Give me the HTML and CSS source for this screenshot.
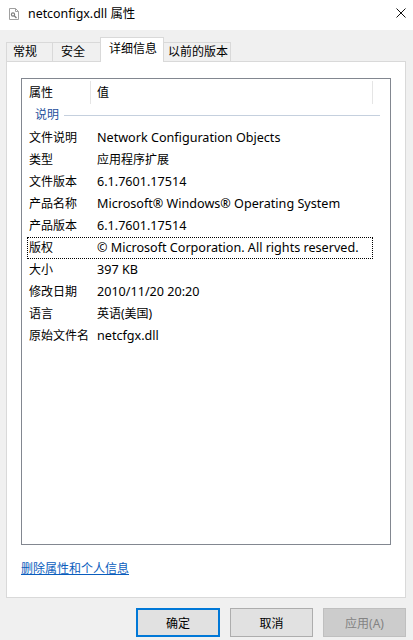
FILE: index.html
```html
<!DOCTYPE html>
<html lang="zh-CN">
<head>
<meta charset="utf-8">
<title>netconfigx.dll 属性</title>
<link rel="stylesheet" href="styles.css">
</head>
<body>
<div class="window">
  <div class="titlebar">
    <svg class="file-icon" width="10" height="12" viewBox="0 0 10 12">
      <path d="M0.5 0.5 H6.5 L9.5 3.5 V11.5 H0.5 Z" fill="#fff" stroke="#a0a0a0"/>
      <path d="M6.5 0.5 V3.5 H9.5" fill="none" stroke="#a0a0a0"/>
      <circle cx="4" cy="6.5" r="1.6" fill="none" stroke="#7d7d7d" stroke-width="1.2"/>
      <path d="M5.2 7.7 L7.5 10" stroke="#7d7d7d" stroke-width="1.3"/>
    </svg>
    <span class="title">netconfigx.dll 属性</span>
    <svg class="close" width="10" height="10" viewBox="0 0 10 10">
      <path d="M0.5 0.5 L9.5 9.5 M9.5 0.5 L0.5 9.5" stroke="#111" stroke-width="1"/>
    </svg>
  </div>

  <div class="body">
    <div class="tabs">
      <div class="tab tab-1">常规</div>
      <div class="tab tab-2">安全</div>
      <div class="tab tab-3 active">详细信息</div>
      <div class="tab tab-4">以前的版本</div>
    </div>

    <div class="panel">
      <div class="list">
        <div class="list-header">
          <div class="hcol hcol-name">属性</div>
          <div class="hsep"></div>
          <div class="hcol hcol-value">值</div>
          <div class="hsep"></div>
        </div>
        <div class="group">
          <span class="group-label">说明</span>
          <span class="group-line"></span>
        </div>
        <div class="row"><span class="c1">文件说明</span><span class="c2 latin">Network Configuration Objects</span></div>
        <div class="row"><span class="c1">类型</span><span class="c2">应用程序扩展</span></div>
        <div class="row"><span class="c1">文件版本</span><span class="c2 latin">6.1.7601.17514</span></div>
        <div class="row"><span class="c1">产品名称</span><span class="c2 latin">Microsoft® Windows® Operating System</span></div>
        <div class="row"><span class="c1">产品版本</span><span class="c2 latin">6.1.7601.17514</span></div>
        <div class="row focus"><span class="c1">版权</span><span class="c2 latin">© Microsoft Corporation. All rights reserved.</span></div>
        <div class="row"><span class="c1">大小</span><span class="c2 latin">397 KB</span></div>
        <div class="row"><span class="c1">修改日期</span><span class="c2 latin">2010/11/20 20:20</span></div>
        <div class="row"><span class="c1">语言</span><span class="c2">英语(美国)</span></div>
        <div class="row"><span class="c1">原始文件名</span><span class="c2 latin">netcfgx.dll</span></div>
      </div>
      <a class="link" href="#">删除属性和个人信息</a>
    </div>

    <div class="buttons">
      <button class="btn default">确定</button>
      <button class="btn">取消</button>
      <button class="btn disabled" disabled>应用(A)</button>
    </div>
  </div>
</div>
</body>
</html>
```

FILE: styles.css
```css
html, body {
  margin: 0;
  padding: 0;
}
body {
  width: 413px;
  height: 640px;
  overflow: hidden;
  background: #f0f0f0;
  font-family: "Noto Sans", "Noto Sans CJK SC", sans-serif;
  font-size: 12px;
  line-height: 16px;
  color: #000;
}
.window {
  width: 413px;
  height: 640px;
}
.titlebar {
  height: 30px;
  background: #fff;
  display: flex;
  align-items: center;
  padding-left: 9px;
  box-sizing: border-box;
}
.file-icon {
  flex: none;
  margin-top: -2px;
}
.title {
  margin-left: 9px;
  margin-top: -3px;
  font-size: 12.4px;
}
.close {
  margin-left: auto;
  margin-right: 7px;
  margin-top: -4px;
}
.body {
  padding: 0 7px 0 6px;
}
.tabs {
  display: flex;
  align-items: flex-end;
  height: 31px;
  position: relative;
  z-index: 1;
}
.tab {
  box-sizing: border-box;
  height: 19px;
  border: 1px solid #d9d9d9;
  border-bottom: none;
  border-left: none;
  background: #f0f0f0;
  padding-left: 6px;
  line-height: 18px;
  white-space: nowrap;
}
.tab-1 { width: 47px; border-left: 1px solid #d9d9d9; }
.tab-2 { width: 48px; padding-left: 8px; }
.tab-3 { width: 64px; }
.tab-4 { width: 67px; padding-left: 4px; }
.tab.active {
  height: 25px;
  margin-bottom: -1px;
  background: #fff;
  border-left: 1px solid #d9d9d9;
  margin-left: -1px;
  padding-left: 8px;
  line-height: 22px;
}
.panel {
  box-sizing: border-box;
  width: 400px;
  height: 537px;
  background: #fff;
  border: 1px solid #d9d9d9;
  padding: 16px 0 0 14px;
}
.list {
  box-sizing: border-box;
  width: 370px;
  height: 467px;
  border: 1px solid #828790;
}
.list-header {
  display: flex;
  height: 26px;
  align-items: flex-start;
}
.hcol {
  height: 26px;
  line-height: 27px;
  box-sizing: border-box;
}
.hcol-name {
  width: 68px;
  padding-left: 7px;
}
.hcol-value {
  width: 281px;
  padding-left: 6px;
}
.hsep {
  width: 1px;
  height: 23px;
  margin-top: 2px;
  background: #e5e5e5;
}
.group {
  display: flex;
  align-items: center;
  height: 22px;
  padding-left: 13px;
  padding-right: 10px;
}
.group-label {
  color: #1e4f9c;
  line-height: 16px;
  margin-top: -2px;
}
.group-line {
  flex: 1;
  height: 1px;
  background: #c5d0de;
  margin-left: 5px;
  margin-top: -1px;
}
.row {
  box-sizing: border-box;
  display: flex;
  align-items: center;
  width: 346px;
  height: 22px;
  margin-left: 5px;
  padding-left: 1px;
  border: 1px dotted transparent;
  white-space: nowrap;
}
.row.focus {
  border-color: #000;
}
.c1 {
  width: 68px;
  flex: none;
}
.c2 {
  flex: 1;
}
.latin {
  font-size: 12.6px;
}
.link {
  display: inline-block;
  margin-top: 16px;
  margin-left: 0;
  color: #0a5dbd;
  text-decoration: underline;
  line-height: 16px;
}
.buttons {
  display: flex;
  justify-content: flex-end;
  gap: 10px;
  margin-top: 10px;
  padding-right: 0;
}
.btn {
  box-sizing: border-box;
  width: 83px;
  height: 29px;
  font-family: "Noto Sans", "Noto Sans CJK SC", sans-serif;
  font-size: 12px;
  color: #000;
  background: #e1e1e1;
  border: 1px solid #adadad;
  padding: 0;
  margin: 0;
}
.btn.default {
  width: 84px;
  border: 2px solid #0078d7;
}
.btn.disabled {
  background: #cccccc;
  border-color: #bfbfbf;
  color: #838383;
}
```
